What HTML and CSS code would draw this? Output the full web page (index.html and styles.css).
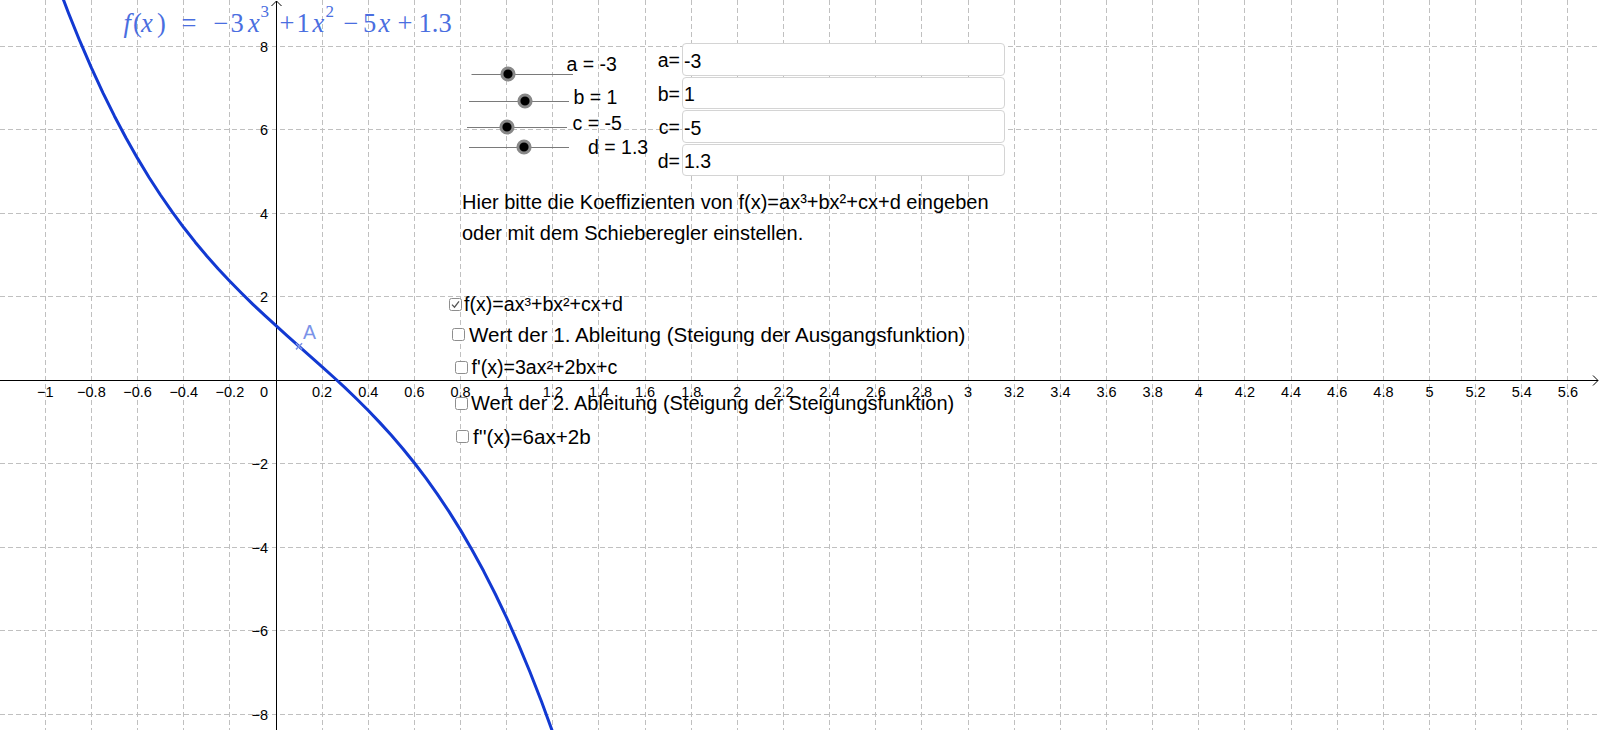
FILE: index.html
```html
<!DOCTYPE html>
<html lang="de">
<head>
<meta charset="utf-8">
<title>Kubische Funktion</title>
<link rel="stylesheet" href="styles.css">
</head>
<body>
<div class="stage">
  <svg class="plot" width="1600" height="730" viewBox="0 0 1600 730" xmlns="http://www.w3.org/2000/svg">
    <path class="grid" d="M45.5 0V730M91.5 0V730M137.5 0V730M183.5 0V730M229.5 0V730M322.5 0V730M368.5 0V730M414.5 0V730M460.5 0V730M506.5 0V730M552.5 0V730M598.5 0V730M645.5 0V730M691.5 0V730M737.5 0V730M783.5 0V730M829.5 0V730M875.5 0V730M921.5 0V730M968.5 0V730M1014.5 0V730M1060.5 0V730M1106.5 0V730M1152.5 0V730M1198.5 0V730M1244.5 0V730M1291.5 0V730M1337.5 0V730M1383.5 0V730M1429.5 0V730M1475.5 0V730M1521.5 0V730M1567.5 0V730"/>
    <path class="grid" d="M0 46.5H1600M0 129.5H1600M0 213.5H1600M0 296.5H1600M0 463.5H1600M0 547.5H1600M0 630.5H1600M0 714.5H1600"/>
    <path class="axis" d="M0 380.5H1598M1593 375.5L1598 380.5L1593 385.5M276.5 730V1M271.5 6L276.5 1L281.5 6"/>
    <g class="tick tick-x">
      <text x="45.3" y="397">−1</text>
      <text x="91.4" y="397">−0.8</text>
      <text x="137.6" y="397">−0.6</text>
      <text x="183.7" y="397">−0.4</text>
      <text x="229.9" y="397">−0.2</text>
      <text x="322.1" y="397">0.2</text>
      <text x="368.3" y="397">0.4</text>
      <text x="414.4" y="397">0.6</text>
      <text x="460.6" y="397">0.8</text>
      <text x="506.7" y="397">1</text>
      <text x="552.8" y="397">1.2</text>
      <text x="599" y="397">1.4</text>
      <text x="645.1" y="397">1.6</text>
      <text x="691.3" y="397">1.8</text>
      <text x="737.4" y="397">2</text>
      <text x="783.5" y="397">2.2</text>
      <text x="829.7" y="397">2.4</text>
      <text x="875.8" y="397">2.6</text>
      <text x="922" y="397">2.8</text>
      <text x="968.1" y="397">3</text>
      <text x="1014.2" y="397">3.2</text>
      <text x="1060.4" y="397">3.4</text>
      <text x="1106.5" y="397">3.6</text>
      <text x="1152.7" y="397">3.8</text>
      <text x="1198.8" y="397">4</text>
      <text x="1244.9" y="397">4.2</text>
      <text x="1291.1" y="397">4.4</text>
      <text x="1337.2" y="397">4.6</text>
      <text x="1383.4" y="397">4.8</text>
      <text x="1429.5" y="397">5</text>
      <text x="1475.6" y="397">5.2</text>
      <text x="1521.8" y="397">5.4</text>
      <text x="1567.9" y="397">5.6</text>
    </g>
    <g class="tick tick-y">
      <text x="268" y="397">0</text>
      <text x="268" y="51.5">8</text>
      <text x="268" y="135">6</text>
      <text x="268" y="218.5">4</text>
      <text x="268" y="302">2</text>
      <text x="268" y="469">−2</text>
      <text x="268" y="552.5">−4</text>
      <text x="268" y="636">−6</text>
      <text x="268" y="719.5">−8</text>
    </g>
    <polyline class="curve" points="56.84,-17.65 68.37,12.73 79.9,41.2 91.44,67.88 102.97,92.84 114.51,116.18 126.04,138 137.58,158.39 149.11,177.45 160.65,195.26 172.19,211.92 183.72,227.53 195.25,242.18 206.79,255.96 218.32,268.97 229.86,281.3 241.4,293.05 252.93,304.31 264.47,315.17 276,325.72 287.54,336.07 299.07,346.31 310.61,356.52 322.14,366.81 333.68,377.26 345.21,387.97 356.75,399.04 368.28,410.56 379.82,422.62 391.35,435.32 402.89,448.75 414.42,463 425.96,478.17 437.49,494.35 449.03,511.64 460.56,530.13 472.1,549.92 483.63,571.09 495.17,593.74 506.7,617.98 518.24,643.88 529.77,671.54 541.31,701.06 552.84,732.54"/>
    <path class="point" d="M296 343.3L302.1 349.4M296 349.4L302.1 343.3"/>
    <text class="point-label" x="303" y="339">A</text>
    <text class="formula" y="32"><tspan class="it" x="123.5">f</tspan><tspan x="133">(</tspan><tspan class="it" x="141">x</tspan><tspan x="157">)</tspan><tspan x="181.5">=</tspan><tspan x="213.5">−</tspan><tspan x="230.5">3</tspan><tspan class="it" x="248">x</tspan><tspan class="sup" x="260.5" y="17">3</tspan><tspan x="279.5" y="32">+</tspan><tspan x="296.5">1</tspan><tspan class="it" x="312.5">x</tspan><tspan class="sup" x="325.5" y="17">2</tspan><tspan x="343.5" y="32">−</tspan><tspan x="363">5</tspan><tspan class="it" x="378.5">x</tspan><tspan x="397.5">+</tspan><tspan x="418.5">1.3</tspan></text>
    <g class="sliders">
      <path class="slider-track" d="M471.5 74.5H573M469 101.5H569M467 127.5H567M469 147.5H569"/>
      <circle class="slider-knob" cx="508" cy="74" r="6.1"/>
      <circle class="slider-knob" cx="525" cy="101" r="6.1"/>
      <circle class="slider-knob" cx="507" cy="127" r="6.1"/>
      <circle class="slider-knob" cx="524" cy="147" r="6.1"/>
      <text class="slider-label" x="566.5" y="70.7">a = -3</text>
      <text class="slider-label" x="573.5" y="104">b = 1</text>
      <text class="slider-label" x="572.5" y="130">c = -5</text>
      <text class="slider-label" x="588" y="154">d = 1.3</text>
    </g>
  </svg>

  <form class="inputs" autocomplete="off">
    <label class="field"><span class="field-label">a=</span><input class="field-box" type="text" value="-3" readonly></label>
    <label class="field"><span class="field-label">b=</span><input class="field-box" type="text" value="1" readonly></label>
    <label class="field"><span class="field-label">c=</span><input class="field-box" type="text" value="-5" readonly></label>
    <label class="field"><span class="field-label">d=</span><input class="field-box" type="text" value="1.3" readonly></label>
  </form>

  <p class="note">Hier bitte die Koeffizienten von f(x)=ax³+bx²+cx+d eingeben<br>oder mit dem Schieberegler einstellen.</p>

  <ul class="checks">
    <li class="check check-1 formula-row"><span class="box"><svg class="tick-mark" width="11" height="11" viewBox="0 0 11 11"><path d="M2 5.6L4.5 8.2L9 2.4"/></svg></span>f(x)=ax³+bx²+cx+d</li>
    <li class="check check-2"><span class="box"></span>Wert der 1. Ableitung (Steigung der Ausgangsfunktion)</li>
    <li class="check check-3 formula-row"><span class="box"></span>f'(x)=3ax²+2bx+c</li>
    <li class="check check-4"><span class="box"></span>Wert der 2. Ableitung (Steigung der Steigungsfunktion)</li>
    <li class="check check-5 formula-row"><span class="box"></span>f''(x)=6ax+2b</li>
  </ul>
</div>
</body>
</html>
```

FILE: styles.css
```css
html, body {
  margin: 0;
  padding: 0;
  background: #ffffff;
}

body {
  font-family: "Liberation Sans", Arial, sans-serif;
  color: #000000;
}

.stage {
  position: relative;
  width: 1600px;
  height: 730px;
  overflow: hidden;
  background: #ffffff;
}

.plot {
  position: absolute;
  left: 0;
  top: 0;
  display: block;
}

.grid {
  fill: none;
  stroke: #c0c0c0;
  stroke-width: 1;
  stroke-dasharray: 5 3;
}

.axis {
  fill: none;
  stroke: #000000;
  stroke-width: 1;
}

.tick {
  font-family: "Liberation Sans", Arial, sans-serif;
  font-size: 14.5px;
  fill: #000000;
}

.tick-x {
  text-anchor: middle;
}

.tick-y {
  text-anchor: end;
}

.curve {
  fill: none;
  stroke: #1239d2;
  stroke-width: 3;
  stroke-linejoin: round;
  stroke-linecap: round;
}

.point {
  fill: none;
  stroke: #7b93e8;
  stroke-width: 1.5;
}

.point-label {
  font-family: "Liberation Sans", Arial, sans-serif;
  font-size: 19.5px;
  fill: #7b93e8;
}

.formula {
  font-family: "Liberation Serif", "Times New Roman", serif;
  font-size: 26.5px;
  fill: #4a6ee0;
}

.formula .it {
  font-style: italic;
}

.formula .sup {
  font-size: 17px;
}

.slider-track {
  fill: none;
  stroke: #7a7a7a;
  stroke-width: 1;
}

.slider-knob {
  fill: #000000;
  stroke: #888888;
  stroke-width: 3;
}

.slider-label {
  font-family: "Liberation Sans", Arial, sans-serif;
  font-size: 19.5px;
  fill: #000000;
}

/* input fields */
.inputs {
  position: absolute;
  left: 640px;
  top: 43px;
  margin: 0;
  display: flex;
  flex-direction: column;
  gap: 1px;
}

.field {
  display: flex;
  align-items: center;
  height: 32.5px;
}

.field-label {
  width: 42px;
  padding: 3px 2px 0 0;
  box-sizing: border-box;
  text-align: right;
  font-size: 19.5px;
}

.field-box {
  width: 323px;
  height: 32.5px;
  box-sizing: border-box;
  margin: 0;
  padding: 4px 0 0 1px;
  border: 1px solid #d4d4d4;
  border-radius: 4px;
  background: #ffffff;
  font-family: "Liberation Sans", Arial, sans-serif;
  font-size: 19.5px;
  color: #000000;
  outline: none;
}

/* explanation text */
.note {
  position: absolute;
  left: 462px;
  top: 186.5px;
  margin: 0;
  font-size: 20px;
  line-height: 31px;
}

/* checkboxes */
.checks {
  position: absolute;
  left: 448px;
  top: 292.5px;
  margin: 0;
  padding: 0;
  list-style: none;
  display: flex;
  flex-direction: column;
}

.check {
  display: flex;
  align-items: center;
  height: 24px;
  font-size: 20.3px;
  white-space: nowrap;
}

.formula-row {
  font-size: 19.6px;
}

.box {
  width: 13px;
  height: 13px;
  box-sizing: border-box;
  border: 1px solid #8e8e8e;
  border-radius: 2.5px;
  background: #ffffff;
  margin-right: 3px;
  display: flex;
  align-items: center;
  justify-content: center;
  flex: none;
}

.tick-mark path {
  fill: none;
  stroke: #555555;
  stroke-width: 1.3;
}

.check-1 {
  margin-left: 1px;
}

.check-1 .box {
  margin-right: 2px;
}

.check-2 {
  margin-left: 4px;
  margin-top: 6px;
  font-size: 20.6px;
}

.check-2 .box {
  margin-right: 4px;
}

.check-3 {
  margin-left: 6.5px;
  margin-top: 9px;
}

.check-3 .box {
  margin-right: 4px;
}

.check-4 {
  margin-left: 7px;
  margin-top: 12px;
  font-size: 20px;
}

.check-5 {
  margin-left: 8px;
  margin-top: 9px;
  font-size: 20.6px;
}

.check-5 .box {
  margin-right: 4px;
}
```
